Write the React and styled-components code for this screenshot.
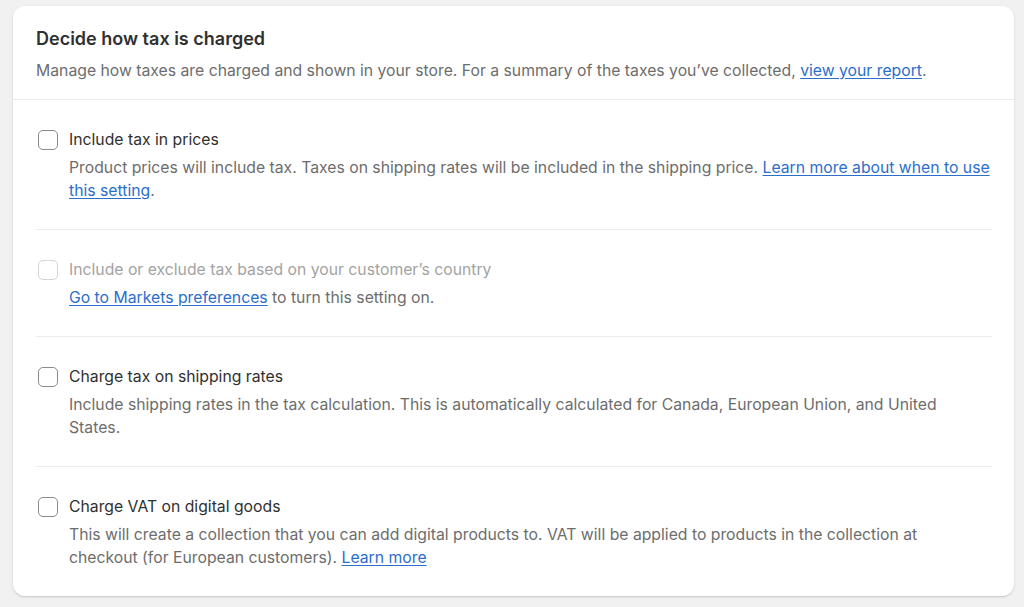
import React from 'react';
import styled, { createGlobalStyle } from 'styled-components';

const GlobalStyle = createGlobalStyle`
    html, body {
        margin: 0;
        padding: 0;
        background: #f1f1f1;
        font-family: Inter, "Noto Sans", sans-serif;
        -webkit-font-smoothing: antialiased;
    }
`;

const Page = styled.div`
    padding: 6px 10px 10px 13px;
    min-height: 607px;
    box-sizing: border-box;
`;

const Card = styled.div`
    background: #fff;
    border-radius: 12px;
    box-shadow: 0 1px 0 rgba(0, 0, 0, 0.07), 0 1px 3px rgba(0, 0, 0, 0.12);
    width: 1001px;
    overflow: hidden;
`;

const Header = styled.div`
    padding: 20px 23px 16px 23px;
    border-bottom: 1px solid #ebebeb;
`;

const Title = styled.h2`
    margin: 0;
    font-size: 18px;
    line-height: 26px;
    font-weight: 600;
    color: #303030;
`;

const Subtitle = styled.p`
    margin: 7px 0 0 0;
    font-size: 15.75px;
    line-height: 24px;
    color: #6d6d6d;
`;

const List = styled.div`
    padding: 0 22px 0 23px;
`;

const Row = styled.div`
    display: flex;
    gap: 11px;
    padding: 29px 0 27px 0;
    border-bottom: 1px solid #ebebeb;
    &:last-child {
        border-bottom: none;
    }
`;

const Checkbox = styled.input.attrs({ type: 'checkbox' })`
    appearance: none;
    flex: none;
    margin: 1px 0 0 2px;
    width: 20px;
    height: 20px;
    box-sizing: border-box;
    border: 1.5px solid #8a8a8a;
    border-radius: 5px;
    background: #fff;
    &:disabled {
        border-color: #d4d4d4;
    }
`;

const RowText = styled.div`
    display: flex;
    flex-direction: column;
`;

const RowTitle = styled.div`
    font-size: 15.75px;
    line-height: 22px;
    color: ${(p) => (p.$disabled ? '#a3a3a3' : '#303030')};
`;

const RowBody = styled.div`
    margin-top: 5px;
    max-width: ${(p) => p.$maxWidth || 'none'};
    font-size: 15.75px;
    line-height: 23px;
    color: #6d6d6d;
`;

const Link = styled.a`
    color: #2c6ecb;
    text-decoration: underline;
    text-underline-offset: 2px;
`;

const settings = [
    {
        id: 'include',
        title: 'Include tax in prices',
        body: (
            <>
                Product prices will include tax. Taxes on shipping rates will be included in the shipping price.{' '}
                <Link href="#">Learn more about when to use this setting</Link>.
            </>
        ),
    },
    {
        id: 'country',
        disabled: true,
        title: 'Include or exclude tax based on your customer\u2019s country',
        body: (
            <>
                <Link href="#">Go to Markets preferences</Link> to turn this setting on.
            </>
        ),
    },
    {
        id: 'shipping',
        title: 'Charge tax on shipping rates',
        body: 'Include shipping rates in the tax calculation. This is automatically calculated for Canada, European Union, and United States.',
    },
    {
        id: 'vat',
        title: 'Charge VAT on digital goods',
        maxWidth: '880px',
        body: (
            <>
                This will create a collection that you can add digital products to. VAT will be applied to products in the collection at checkout (for European customers).{' '}
                <Link href="#">Learn more</Link>
            </>
        ),
    },
];

const App = () => (
    <Page>
        <GlobalStyle />
        <Card>
            <Header>
                <Title>Decide how tax is charged</Title>
                <Subtitle>
                    Manage how taxes are charged and shown in your store. For a summary of the taxes you’ve collected,{' '}
                    <Link href="#">view your report</Link>.
                </Subtitle>
            </Header>
            <List>
                {settings.map((s) => (
                    <Row key={s.id}>
                        <Checkbox disabled={s.disabled} />
                        <RowText>
                            <RowTitle $disabled={s.disabled}>{s.title}</RowTitle>
                            <RowBody $maxWidth={s.maxWidth}>{s.body}</RowBody>
                        </RowText>
                    </Row>
                ))}
            </List>
        </Card>
    </Page>
);

export default App;
